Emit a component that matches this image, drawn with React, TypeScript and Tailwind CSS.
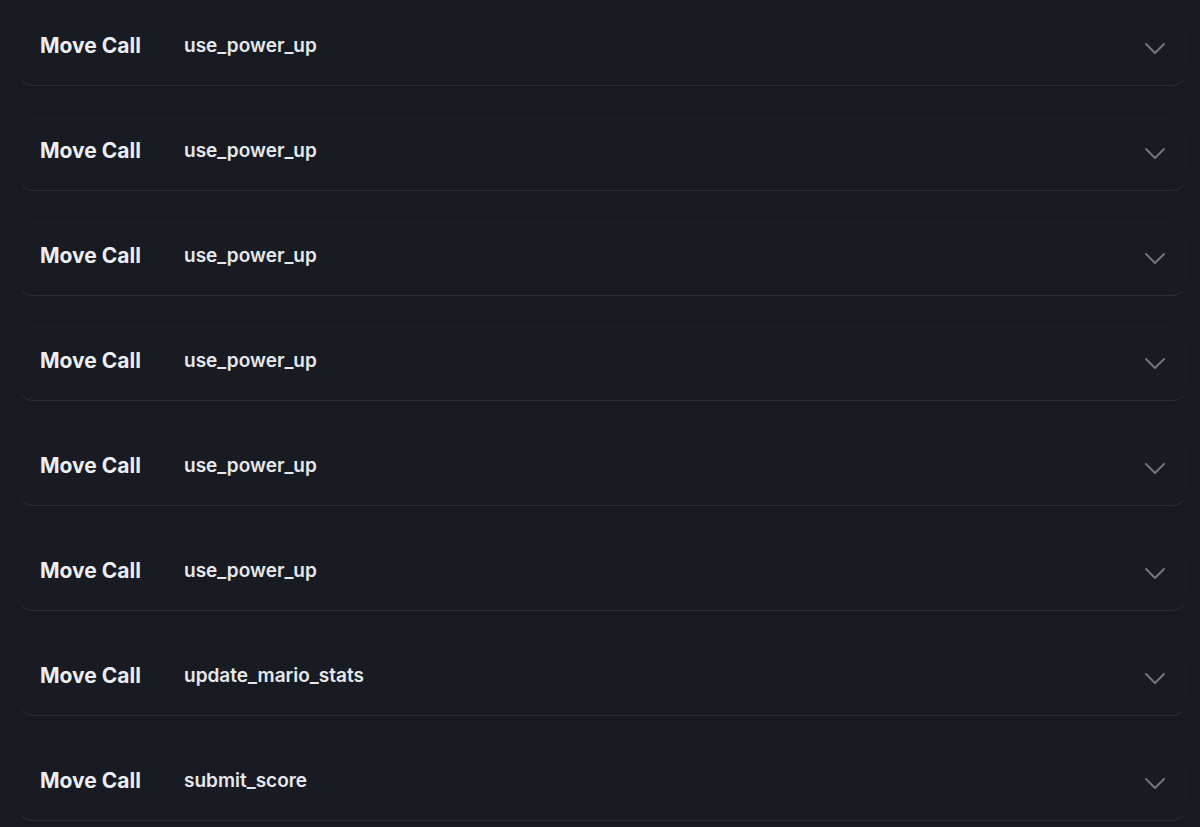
const calls = [
  'use_power_up',
  'use_power_up',
  'use_power_up',
  'use_power_up',
  'use_power_up',
  'use_power_up',
  'update_mario_stats',
  'submit_score',
];

function Chevron() {
  return (
    <svg width="24" height="14" viewBox="0 0 24 14" fill="none" className="text-[#74767d]">
      <path d="M3 3l9 9 9-9" stroke="currentColor" strokeWidth="2" strokeLinecap="round" strokeLinejoin="round" />
    </svg>
  );
}

function CallRow({ name }: { name: string }) {
  return (
    <div className="ml-[17px] mr-[12px] flex items-center rounded-2xl border border-[#1b1e25] border-b-[#2a2d36] bg-[#181b22] pl-[22px] pr-[20px] pt-[20px] pb-[26px]">
      <span className="w-[144px] text-[21px] font-bold leading-[26px] text-[#eceef2]">Move Call</span>
      <span className="flex-1 text-[19px] font-semibold leading-[26px] text-[#e6e8ec]">{name}</span>
      <span className="mt-[4px]">
        <Chevron />
      </span>
    </div>
  );
}

export default function App() {
  return (
    <div className="min-h-[827px] bg-[#181a20] pt-[12px] font-['Inter',sans-serif]">
      <div className="flex flex-col gap-[31px]">
        {calls.map((c, i) => (
          <CallRow key={i} name={c} />
        ))}
      </div>
    </div>
  );
}
